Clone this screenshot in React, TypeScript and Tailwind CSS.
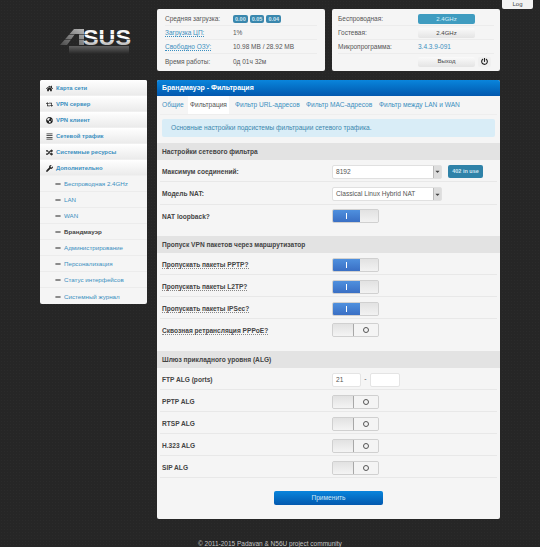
import { FaHome, FaRetweet, FaGlobeAmericas, FaAlignJustify, FaRandom, FaWrench, FaMinus, FaPowerOff, FaCaretDown } from 'react-icons/fa'

const mainMenu = [
  { label: 'Карта сети', Icon: FaHome },
  { label: 'VPN сервер', Icon: FaRetweet },
  { label: 'VPN клиент', Icon: FaGlobeAmericas },
  { label: 'Сетевой трафик', Icon: FaAlignJustify },
  { label: 'Системные ресурсы', Icon: FaRandom },
  { label: 'Дополнительно', Icon: FaWrench },
]

const subMenu = ['Беспроводная 2.4GHz', 'LAN', 'WAN', 'Брандмауэр', 'Администрирование', 'Персонализация', 'Статус интерфейсов', 'Системный журнал']

function Logo() {
  return (
    <svg width="80" height="36" viewBox="0 0 80 36" className="ml-[17px] mt-[17px]">
      <defs>
        <linearGradient id="silver" x1="0" y1="0" x2="0" y2="1">
          <stop offset="0" stopColor="#e8e8e8" />
          <stop offset="0.5" stopColor="#ffffff" />
          <stop offset="1" stopColor="#8a8a8a" />
        </linearGradient>
        <linearGradient id="wedge" x1="0" y1="1" x2="1" y2="0">
          <stop offset="0" stopColor="#4a4a4a" />
          <stop offset="1" stopColor="#b8b8b8" />
        </linearGradient>
        <linearGradient id="mirror" x1="0" y1="0" x2="0" y2="1">
          <stop offset="0" stopColor="#6e6e6e" />
          <stop offset="1" stopColor="#262626" />
        </linearGradient>
      </defs>
      <polygon points="3,19 17,3 27,3 27,19 22,19 22,8 18,8 10,19" fill="url(#wedge)" />
      <text x="26" y="19" fontFamily="'Liberation Sans', sans-serif" fontWeight="700" fontSize="22" textLength="48" lengthAdjust="spacingAndGlyphs" fill="url(#silver)">SUS</text>
      <rect x="3" y="8" width="72" height="1" fill="#262626" opacity="0.6" />
      <rect x="3" y="13" width="72" height="1" fill="#262626" opacity="0.6" />
      <rect x="12" y="20" width="60" height="8" fill="url(#mirror)" opacity="0.8" />
    </svg>
  )
}

function Toggle({ on }: { on: boolean }) {
  return (
    <div className="flex h-[14px] w-[47px] overflow-hidden rounded-[2px] border border-[#d0d0d0] bg-[#e6e6e6]">
      {on ? (
        <>
          <div className="flex w-[27px] items-center justify-center bg-gradient-to-b from-[#4f90de] to-[#3a6fc4]">
            <div className="h-[6px] w-px bg-white" />
          </div>
          <div className="flex-1 bg-gradient-to-b from-[#e2e2e2] to-[#f2f2f2]" />
        </>
      ) : (
        <>
          <div className="w-[20px] bg-gradient-to-b from-[#e2e2e2] to-[#f4f4f4]" />
          <div className="flex flex-1 items-center justify-center border-l border-[#a8a8a8] bg-[#f4f4f4]">
            <div className="size-[6px] rounded-full border border-[#555]" />
          </div>
        </>
      )}
    </div>
  )
}

function Section({ title }: { title: string }) {
  return (
    <div className="flex h-[17px] items-center bg-[#e3e3e3] px-[5px] text-[6.6px] font-bold text-[#444]">{title}</div>
  )
}

function Row({ label, dotted, tall, children }: { label: string; dotted?: boolean; tall?: boolean; children: React.ReactNode }) {
  return (
    <div className={`mx-[3px] flex items-center border-b border-[#e8e8e8] pl-[2px] pt-[2px] ${tall ? 'h-[23px]' : 'h-[22px]'}`}>
      <div className="w-[170px] shrink-0 text-[6.6px] font-bold text-[#444]">
        <span className={dotted ? 'border-b border-dotted border-[#888]' : ''}>{label}</span>
      </div>
      {children}
    </div>
  )
}

function SelectBox({ value }: { value: string }) {
  return (
    <div className="flex h-[14px] w-[110px] items-center justify-between rounded-[2px] border border-[#e0e0e0] bg-white pl-[3px] text-[6.6px] text-[#555]">
      <span>{value}</span>
      <span className="flex h-full w-[8px] items-center justify-center border-l border-[#bbb] bg-[#ddd] text-[#444]">
        <FaCaretDown size={7} />
      </span>
    </div>
  )
}

function StatusRow({ children }: { children: React.ReactNode }) {
  return <div className="flex h-[14px] items-center border-b border-[#ececec] pt-px text-[6.5px] text-[#555] last:border-0">{children}</div>
}

function SmallButton({ label, active }: { label: string; active?: boolean }) {
  return (
    <div className={`flex h-[10px] w-[57px] items-center justify-center rounded-[2px] text-[6px] ${active ? 'bg-[#3f9cc0] text-[#d8f0f8]' : 'bg-gradient-to-b from-[#fafafa] to-[#e4e4e4] text-[#444]'}`}>
      {label}
    </div>
  )
}

export default function App() {
  return (
    <div className="relative h-[547px] w-[540px] overflow-hidden bg-[#262626] bg-[radial-gradient(#2b2b2b_1px,transparent_1px)] bg-[length:3px_3px] font-['Liberation_Sans',sans-serif]">
      <div className="absolute right-[7px] top-0 flex h-[9px] w-[31px] items-center justify-center rounded-b-[2px] bg-[#f2f2f2] text-[6px] text-[#444]">Log</div>

      <div className="grid grid-cols-[107px_343px] gap-x-[10px] pl-[40px] pt-[9px]">
        {/* Шапка */}
        <Logo />
        <div className="flex h-[62px] gap-[7px]">
          <div className="w-[168px] rounded-[2px] bg-[#f5f5f5] px-[8px] py-[3px]">
            <StatusRow>
              <span className="w-[68px]">Средняя загрузка:</span>
              <span className="flex gap-[2px]">
                {['0.00', '0.05', '0.04'].map(v => (
                  <span key={v} className="rounded-[2px] bg-[#3a87ad] px-[2px] text-[5.5px] font-bold leading-[8px] text-[#cfe6f2]">{v}</span>
                ))}
              </span>
            </StatusRow>
            <StatusRow>
              <span className="w-[68px]"><span className="border-b border-dotted border-[#3a8fc0] text-[#3a8fc0]">Загрузка ЦП:</span></span>
              <span>1%</span>
            </StatusRow>
            <StatusRow>
              <span className="w-[68px]"><span className="border-b border-dotted border-[#3a8fc0] text-[#3a8fc0]">Свободно ОЗУ:</span></span>
              <span>10.98 MB / 28.92 MB</span>
            </StatusRow>
            <StatusRow>
              <span className="w-[68px]">Время работы:</span>
              <span>0д 01ч 32м</span>
            </StatusRow>
          </div>
          <div className="w-[168px] rounded-[2px] bg-[#f5f5f5] px-[6px] py-[3px]">
            <StatusRow>
              <span className="w-[80px]">Беспроводная:</span>
              <SmallButton label="2.4GHz" active />
            </StatusRow>
            <StatusRow>
              <span className="w-[80px]">Гостевая:</span>
              <SmallButton label="2.4GHz" />
            </StatusRow>
            <StatusRow>
              <span className="w-[80px]">Микропрограмма:</span>
              <span className="text-[#3a8fc0]">3.4.3.9-091</span>
            </StatusRow>
            <StatusRow>
              <span className="w-[80px]" />
              <SmallButton label="Выход" />
              <span className="ml-[3px] flex h-[10px] w-[13px] items-center justify-center rounded-[2px] bg-[#f0f0f0] text-[#222]">
                <FaPowerOff size={7} />
              </span>
            </StatusRow>
          </div>
        </div>

        {/* Боковое меню */}
        <div className="mt-[9px] h-[224px] w-[107px] overflow-hidden rounded-[2px] bg-[#f5f5f5]">
          {mainMenu.map(({ label, Icon }) => (
            <div key={label} className="flex h-[16px] items-center gap-[3px] border-b border-[#f0f0f0] bg-gradient-to-b from-white to-[#ebebeb] pl-[5px] pt-px text-[5.9px] font-bold text-[#3a8fc0]">
              <span className="flex w-[8px] justify-center text-[#222]"><Icon size={7} /></span>
              <span>{label}</span>
            </div>
          ))}
          {subMenu.map(label => (
            <div key={label} className={`flex h-[16px] items-center gap-[3px] border-b border-[#ececec] pl-[15px] pt-px text-[6.2px] last:border-0 ${label === 'Брандмауэр' ? 'font-bold text-[#444]' : 'text-[#3a8fc0]'}`}>
              <FaMinus size={6} className="text-[#222]" />
              <span>{label}</span>
            </div>
          ))}
        </div>

        {/* Основная панель */}
        <div className="mt-[9px] h-[439px] overflow-hidden rounded-[2px] bg-[#f5f5f5]">
          <div className="flex h-[16px] items-center bg-gradient-to-b from-[#0a85dc] to-[#0358ae] px-[5px] text-[7px] font-bold text-white">
            Брандмауэр - Фильтрация
          </div>
          <div className="mx-[3px] flex h-[19px] border-b border-[#eee] text-[6.6px] text-[#3a8fc0]">
            <div className="flex w-[28px] items-center pl-[2px]">Общие</div>
            <div className="flex w-[41px] items-center justify-center bg-white text-[#555]">Фильтрация</div>
            <div className="flex w-[71px] items-center pl-[6px]">Фильтр URL-адресов</div>
            <div className="flex w-[73px] items-center pl-[6px]">Фильтр MAC-адресов</div>
            <div className="flex items-center pl-[6px]">Фильтр между LAN и WAN</div>
          </div>
          <div className="mx-[5px] mt-[4px] flex h-[18px] items-center rounded-[2px] bg-[#d9edf7] pl-[9px] text-[6.6px] text-[#3a87ad]">
            Основные настройки подсистемы фильтрации сетевого трафика.
          </div>

          <div className="mt-[6px]">
            <Section title="Настройки сетевого фильтра" />
            <Row label="Максимум соединений:">
              <SelectBox value="8192" />
              <span className="ml-[6px] flex h-[13px] w-[35px] items-center justify-center rounded-[2px] bg-[#2f82a8] text-[5.5px] font-bold text-[#cfe6f2]">402 in use</span>
            </Row>
            <Row label="Модель NAT:" tall>
              <SelectBox value="Classical Linux Hybrid NAT" />
            </Row>
            <div className="mx-[3px] flex h-[31px] pl-[2px] pt-[4px]">
              <div className="w-[170px] shrink-0 pt-[3px] text-[6.6px] font-bold text-[#444]">NAT loopback?</div>
              <Toggle on />
            </div>
          </div>

          <Section title="Пропуск VPN пакетов через маршрутизатор" />
          <Row label="Пропускать пакеты PPTP?" dotted><Toggle on /></Row>
          <Row label="Пропускать пакеты L2TP?" dotted><Toggle on /></Row>
          <Row label="Пропускать пакеты IPSec?" dotted><Toggle on /></Row>
          <div className="mx-[3px] flex h-[32px] pl-[2px] pt-[4px]">
            <div className="w-[170px] shrink-0 pt-[3px] text-[6.6px] font-bold text-[#444]">
              <span className="border-b border-dotted border-[#888]">Сквозная ретрансляция PPPoE?</span>
            </div>
            <Toggle on={false} />
          </div>

          <Section title="Шлюз прикладного уровня (ALG)" />
          <Row label="FTP ALG (ports)">
            <div className="flex h-[14px] w-[29px] items-center rounded-[2px] border border-[#e4e4e4] bg-white pl-[3px] text-[6.6px] text-[#555]">21</div>
            <span className="w-[9px] text-center text-[7px] text-[#555]">-</span>
            <div className="h-[14px] w-[30px] rounded-[2px] border border-[#e4e4e4] bg-white" />
          </Row>
          <Row label="PPTP ALG"><Toggle on={false} /></Row>
          <Row label="RTSP ALG"><Toggle on={false} /></Row>
          <Row label="H.323 ALG"><Toggle on={false} /></Row>
          <Row label="SIP ALG"><Toggle on={false} /></Row>

          <div className="mt-[13px] flex justify-center">
            <div className="flex h-[14px] w-[109px] items-center justify-center rounded-[2px] bg-gradient-to-b from-[#0a85dc] to-[#0358ae] text-[6.6px] text-[#cfe6f8]">
              Применить
            </div>
          </div>
        </div>
      </div>

      <div className="mt-[20px] pl-[198px] text-[6.5px] text-[#c4c4c4]">© 2011-2015 Padavan &amp; N56U project community</div>
    </div>
  )
}
